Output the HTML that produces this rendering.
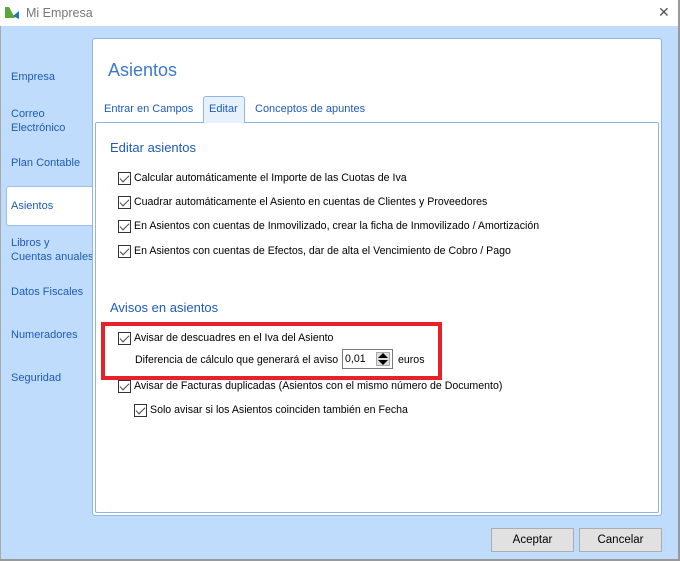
<!DOCTYPE html>
<html><head><meta charset="utf-8"><style>
*{margin:0;padding:0;box-sizing:border-box}
body{width:680px;height:561px;overflow:hidden;background:#fff;font-family:"Liberation Sans",sans-serif;font-size:12px;position:relative}
.a{position:absolute;white-space:nowrap}
.nav{color:#1e5bb5;font-size:11px;line-height:14px}
.cb{position:absolute;width:13px;height:13px;border:1px solid #333;background:#fff}
.cb:after{content:"";position:absolute;left:3px;top:0px;width:4px;height:8px;border:solid #444;border-width:0 1.2px 1.2px 0;transform:rotate(45deg)}
.lbl{position:absolute;font-size:10.6px;color:#000;white-space:nowrap;line-height:13px}
.btn{position:absolute;background:#e1e1e1;border:1px solid #adadad;text-align:center;font-size:11.5px;line-height:22px}
.tab{position:absolute;font-size:11px;color:#1e5bb5;white-space:nowrap}
</style></head><body>
<div class="a" style="left:0;top:0;width:680px;height:26px;background:#fff"></div>
<svg class="a" style="left:4px;top:6px" width="16" height="14"><polygon points="1,1 5,1 11,12 1,12" fill="#5aa83a"/><polygon points="9,10 15,5 15,13" fill="#1e73be"/></svg>
<div class="a" style="left:26px;top:6px;font-size:12.5px;color:#777">Mi Empresa</div>
<div class="a" style="left:658px;top:4px;font-size:14px;color:#555">✕</div>
<div class="a" style="left:0;top:26px;width:678px;height:535px;background:#c0dcfc;border-left:1px solid #aaa"></div>
<div class="a" style="left:678px;top:0;width:2px;height:561px;background:#999"></div>
<div class="a" style="left:6px;top:186px;width:87px;height:40px;background:#fff;border:1px solid #9cc0ee;border-right:none;border-radius:3px 0 0 3px"></div>
<div class="a nav" style="left:11px;top:70px">Empresa</div>
<div class="a nav" style="left:11px;top:107px">Correo<br>Electrónico</div>
<div class="a nav" style="left:11px;top:156px">Plan Contable</div>
<div class="a nav" style="left:11px;top:199px">Asientos</div>
<div class="a nav" style="left:11px;top:236px">Libros y<br>Cuentas anuales</div>
<div class="a nav" style="left:11px;top:285px">Datos Fiscales</div>
<div class="a nav" style="left:11px;top:328px">Numeradores</div>
<div class="a nav" style="left:11px;top:371px">Seguridad</div>
<div class="a" style="left:92px;top:38px;width:570px;height:478px;background:#fff;border:1px solid #8fb4e8;border-radius:3px"></div>
<div class="a" style="left:108px;top:60px;font-size:18px;color:#3b7bcc">Asientos</div>
<div class="a" style="left:95px;top:122px;width:564px;height:391px;border:1px solid #8fb4e8;border-radius:2px"></div>
<div class="a" style="left:203px;top:96px;width:42px;height:27px;background:#e6f1fc;border:1px solid #8fb4e8;border-bottom:none;border-radius:3px 3px 0 0"></div>
<div class="tab" style="left:104px;top:103px">Entrar en Campos</div>
<div class="tab" style="left:209px;top:103px">Editar</div>
<div class="tab" style="left:255px;top:103px">Conceptos de apuntes</div>
<div class="a" style="left:110px;top:140px;font-size:13px;color:#1e5bb5">Editar asientos</div>
<div class="cb" style="left:118px;top:172px"></div><div class="lbl" style="left:134px;top:172px">Calcular automáticamente el Importe de las Cuotas de Iva</div>
<div class="cb" style="left:118px;top:196px"></div><div class="lbl" style="left:134px;top:196px">Cuadrar automáticamente el Asiento en cuentas de Clientes y Proveedores</div>
<div class="cb" style="left:118px;top:220px"></div><div class="lbl" style="left:134px;top:220px">En Asientos con cuentas de Inmovilizado, crear la ficha de Inmovilizado / Amortización</div>
<div class="cb" style="left:118px;top:245px"></div><div class="lbl" style="left:134px;top:245px">En Asientos con cuentas de Efectos, dar de alta el Vencimiento de Cobro / Pago</div>
<div class="a" style="left:110px;top:300px;font-size:13px;color:#1e5bb5">Avisos en asientos</div>
<div class="a" style="left:101px;top:322px;width:341px;height:58px;border:4px solid #e8202a"></div>
<div class="cb" style="left:118px;top:332px"></div><div class="lbl" style="left:134px;top:332px">Avisar de descuadres en el Iva del Asiento</div>
<div class="lbl" style="left:135px;top:354px">Diferencia de cálculo que generará el aviso</div>
<div class="a" style="left:342px;top:349px;width:51px;height:20px;border:1px solid #7a7a7a;background:#fff"></div>
<div class="lbl" style="left:345px;top:353px">0,01</div>
<div class="a" style="left:376px;top:352px;width:14px;height:14px;background:#ddd;border:1px solid #aaa"></div>
<div class="a" style="left:378px;top:353px;width:0;height:0;border:5px solid transparent;border-bottom:5px solid #000;border-top:0"></div>
<div class="a" style="left:378px;top:360px;width:0;height:0;border:5px solid transparent;border-top:5px solid #000;border-bottom:0"></div>
<div class="lbl" style="left:398px;top:354px">euros</div>
<div class="cb" style="left:118px;top:380px"></div><div class="lbl" style="left:134px;top:380px">Avisar de Facturas duplicadas (Asientos con el mismo número de Documento)</div>
<div class="cb" style="left:134px;top:404px"></div><div class="lbl" style="left:150px;top:404px">Solo avisar si los Asientos coinciden también en Fecha</div>
<div class="btn" style="left:491px;top:528px;width:83px;height:24px">Aceptar</div>
<div class="btn" style="left:579px;top:528px;width:83px;height:24px">Cancelar</div>
<div class="a" style="left:0;top:559px;width:680px;height:2px;background:#999"></div>
</body></html>
